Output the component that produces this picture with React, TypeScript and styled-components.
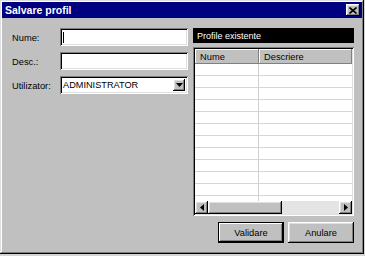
import React from 'react'
import styled, { createGlobalStyle } from 'styled-components'

const GlobalStyle = createGlobalStyle`
  html, body {
    margin: 0;
    padding: 0;
    background: #d4d4d4;
  }
  body {
    font-family: "Liberation Sans", Arial, sans-serif;
    font-size: 9px;
    color: #000;
  }
`

const raised = `
  background: #c0c0c0;
  box-shadow: inset -1px -1px #000, inset 1px 1px #fff, inset -2px -2px #808080, inset 2px 2px #dfdfdf;
`

const sunken = `
  box-shadow: inset 1px 1px #808080, inset -1px -1px #fff, inset 2px 2px #000, inset -2px -2px #dfdfdf;
`

const Window = styled.div`
  width: 364px;
  height: 254px;
  box-sizing: border-box;
  background: #c0c0c0;
  box-shadow: inset -1px -1px #000, inset 1px 1px #dfdfdf, inset -2px -2px #808080, inset 2px 2px #fff;
  display: flex;
  flex-direction: column;
  padding: 2px;
`

const TitleBar = styled.div`
  height: 16px;
  background: #000080;
  display: flex;
  align-items: center;
  justify-content: space-between;
  padding: 0 2px 0 3px;
`

const Title = styled.span`
  color: #fff;
  font-weight: bold;
  font-size: 10.5px;
`

const CloseButton = styled.div`
  ${raised}
  width: 14px;
  height: 12px;
  display: flex;
  align-items: center;
  justify-content: center;
`

const Body = styled.div`
  flex: 1;
  display: flex;
  flex-direction: column;
  padding: 10px 8px 0 10px;
`

const MainRow = styled.div`
  display: flex;
  gap: 5px;
`

const Form = styled.div`
  width: 176px;
  display: grid;
  grid-template-columns: 48px 128px;
  grid-auto-rows: 18px;
  row-gap: 6px;
  align-items: center;
  align-content: start;
`

const Label = styled.label`
  font-size: 9.3px;
  padding-top: 1px;
`

const Field = styled.div`
  ${sunken}
  background: #fff;
  height: 18px;
  box-sizing: border-box;
  display: flex;
  align-items: center;
  padding: 0 3px;
`

const Caret = styled.span`
  width: 1px;
  height: 11px;
  background: #000;
`

const ComboText = styled.span`
  flex: 1;
  font-size: 9.2px;
`

const ComboButton = styled.div`
  ${raised}
  width: 12px;
  height: 12px;
  margin-right: 0;
  display: flex;
  align-items: center;
  justify-content: center;
`

const Panel = styled.div`
  width: 161px;
  display: flex;
  flex-direction: column;
  gap: 4px;
`

const PanelHeader = styled.div`
  height: 15px;
  background: #000;
  color: #fff;
  font-size: 9px;
  display: flex;
  align-items: center;
  padding-left: 4px;
`

const List = styled.div`
  ${sunken}
  height: 169px;
  box-sizing: border-box;
  padding: 2px;
  background: #fff;
  display: flex;
  flex-direction: column;
`

const ListHead = styled.div`
  display: grid;
  grid-template-columns: 64px 1fr;
  height: 15px;
`

const HeadCell = styled.div`
  background: #c0c0c0;
  box-shadow: inset -1px -1px #808080, inset 1px 1px #fff;
  display: flex;
  align-items: center;
  padding-left: 5px;
  font-size: 9.3px;
`

const Rows = styled.div`
  flex: 1;
  overflow: hidden;
`

const Row = styled.div`
  display: grid;
  grid-template-columns: 64px 1fr;
  height: 12px;
  border-bottom: 1px solid #d6d6d6;
  box-sizing: border-box;
`

const Cell = styled.div<{ $divider?: boolean }>`
  border-right: ${p => (p.$divider ? '1px solid #cfcfcf' : 'none')};
`

const ScrollBar = styled.div`
  height: 13px;
  display: flex;
  background: #e4e4e4;
`

const ScrollArrow = styled.div`
  ${raised}
  width: 13px;
  display: flex;
  align-items: center;
  justify-content: center;
`

const Thumb = styled.div<{ $width: number }>`
  ${raised}
  width: ${p => p.$width}px;
`

const Track = styled.div`
  flex: 1;
`

const Buttons = styled.div`
  display: flex;
  justify-content: flex-end;
  gap: 4px;
  margin-top: 6px;
`

const Button = styled.button<{ $default?: boolean }>`
  ${raised}
  width: 66px;
  height: 21px;
  border: none;
  font-family: "Liberation Sans", Arial, sans-serif;
  font-size: 9.3px;
  padding: 0;
  color: #000;
  ${p =>
    p.$default
      ? 'box-shadow: inset 0 0 0 1px #000, inset -2px -2px #000, inset 2px 2px #fff, inset -3px -3px #808080;'
      : ''}
`

const Triangle = ({ dir }: { dir: 'down' | 'left' | 'right' }) => {
  const points = {
    down: '0,0 7,0 3.5,4',
    left: '4,0 4,7 0,3.5',
    right: '0,0 0,7 4,3.5',
  }[dir]
  const w = dir === 'down' ? 7 : 4
  const h = dir === 'down' ? 4 : 7
  return (
    <svg width={w} height={h} viewBox={`0 0 ${w} ${h}`}>
      <polygon points={points} fill="#000" />
    </svg>
  )
}

export default function App() {
  const rows = Array.from({ length: 12 })
  return (
    <>
      <GlobalStyle />
      <Window>
        <TitleBar>
          <Title>Salvare profil</Title>
          <CloseButton>
            <svg width="8" height="7" viewBox="0 0 8 7">
              <path d="M0.5 0.5 L7.5 6.5 M7.5 0.5 L0.5 6.5" stroke="#000" strokeWidth="1.6" />
            </svg>
          </CloseButton>
        </TitleBar>
        <Body>
          <MainRow>
            <Form>
              <Label>Nume:</Label>
              <Field>
                <Caret />
              </Field>
              <Label>Desc.:</Label>
              <Field />
              <Label>Utilizator:</Label>
              <Field>
                <ComboText>ADMINISTRATOR</ComboText>
                <ComboButton>
                  <Triangle dir="down" />
                </ComboButton>
              </Field>
            </Form>
            <Panel>
              <PanelHeader>Profile existente</PanelHeader>
              <List>
                <ListHead>
                  <HeadCell>Nume</HeadCell>
                  <HeadCell>Descriere</HeadCell>
                </ListHead>
                <Rows>
                  {rows.map((_, i) => (
                    <Row key={i}>
                      <Cell $divider />
                      <Cell />
                    </Row>
                  ))}
                </Rows>
                <ScrollBar>
                  <ScrollArrow>
                    <Triangle dir="left" />
                  </ScrollArrow>
                  <Thumb $width={74} />
                  <Track />
                  <ScrollArrow>
                    <Triangle dir="right" />
                  </ScrollArrow>
                </ScrollBar>
              </List>
            </Panel>
          </MainRow>
          <Buttons>
            <Button $default>Validare</Button>
            <Button>Anulare</Button>
          </Buttons>
        </Body>
      </Window>
    </>
  )
}
